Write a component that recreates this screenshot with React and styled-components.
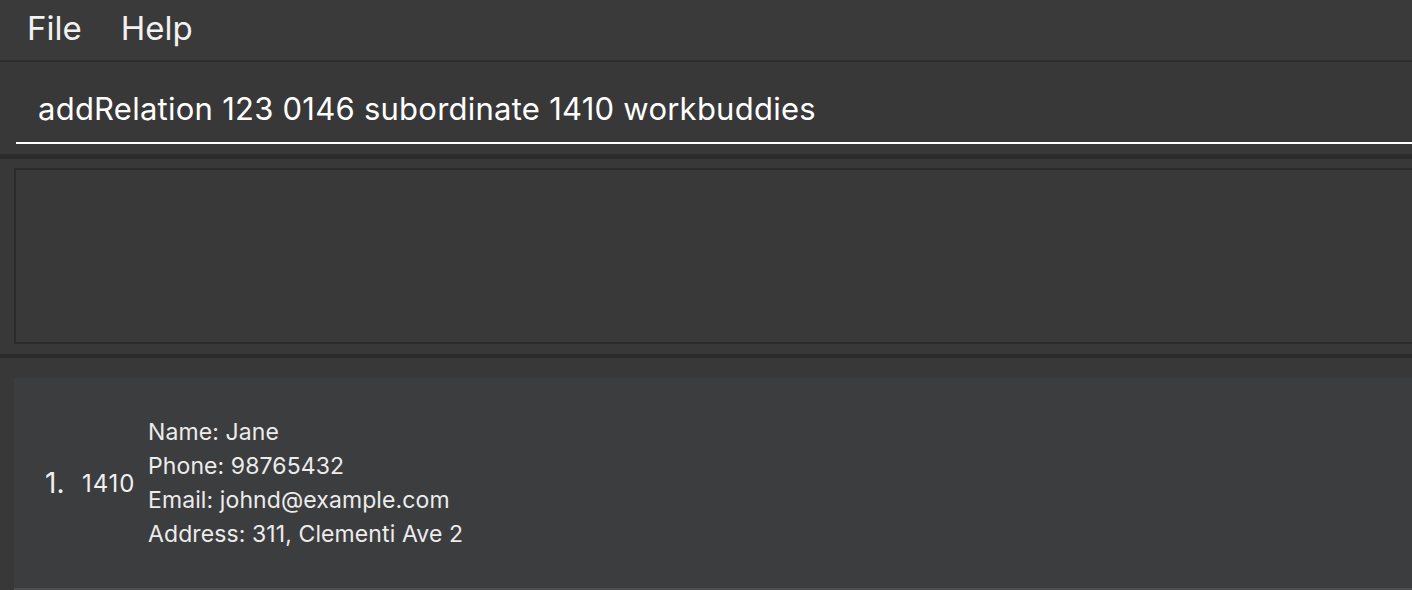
import React from "react";
import styled, { createGlobalStyle } from "styled-components";

const GlobalStyle = createGlobalStyle`
  html, body {
    margin: 0;
    padding: 0;
    background: #383838;
    overflow: hidden;
  }
  * { box-sizing: border-box; }
`;

const FONT = `Inter, "Open Sans", "Liberation Sans", sans-serif`;

const Window = styled.div`
  width: 1412px;
  height: 590px;
  display: flex;
  flex-direction: column;
  background: #383838;
  font-family: ${FONT};
  color: #f0f0f0;
  overflow: hidden;
`;

const MenuBar = styled.div`
  height: 62px;
  flex-shrink: 0;
  display: flex;
  align-items: center;
  gap: 39px;
  padding: 0 0 5px 27px;
  background: #3a3a3a;
  border-bottom: 2px solid #2d2d2d;
`;

const MenuItem = styled.span`
  font-size: 33px;
  color: #f2f2f2;
`;

const CommandArea = styled.div`
  height: 92px;
  flex-shrink: 0;
  padding: 20px 0 0 16px;
  background: #383838;
`;

const CommandInput = styled.div`
  height: 62px;
  border-bottom: 2px solid #ffffff;
  padding: 0 0 8px 22px;
  display: flex;
  align-items: center;
  font-size: 31px;
  color: #ffffff;
  letter-spacing: 0.25px;
  white-space: nowrap;
`;

const Separator = styled.div`
  height: ${(p) => p.$h}px;
  flex-shrink: 0;
  background: #2b2b2b;
`;

const ResultArea = styled.div`
  height: 195px;
  flex-shrink: 0;
  padding: 9px 0 10px 14px;
  background: #383838;
`;

const ResultBox = styled.div`
  width: 1420px;
  height: 176px;
  border: 2px solid #2b2b2b;
  background: #393939;
`;

const ListArea = styled.div`
  flex: 1;
  padding: 20px 0 0 14px;
  background: #383838;
`;

const Card = styled.div`
  width: 1420px;
  height: 210px;
  background: #3c3d3f;
  border-bottom: 2px solid #4c4f52;
  display: flex;
  align-items: center;
  padding-left: 31px;
  box-sizing: content-box;
`;

const Index = styled.span`
  font-size: 28px;
  color: #f0f0f0;
  width: 37px;
  flex-shrink: 0;
`;

const Id = styled.span`
  font-size: 24px;
  letter-spacing: 0.9px;
  color: #f0f0f0;
  width: 66px;
  flex-shrink: 0;
`;

const Details = styled.div`
  display: flex;
  flex-direction: column;
`;

const Field = styled.div`
  font-size: 23px;
  line-height: 34px;
  letter-spacing: 0.1px;
  color: #ececec;
`;

export default function App() {
  return (
    <>
      <GlobalStyle />
      <Window>
        <MenuBar>
          <MenuItem>File</MenuItem>
          <MenuItem>Help</MenuItem>
        </MenuBar>
        <CommandArea>
          <CommandInput>addRelation 123 0146 subordinate 1410 workbuddies</CommandInput>
        </CommandArea>
        <Separator $h={5} />
        <ResultArea>
          <ResultBox />
        </ResultArea>
        <Separator $h={4} />
        <ListArea>
          <Card>
            <Index>1.</Index>
            <Id>1410</Id>
            <Details>
              <Field>Name: Jane</Field>
              <Field>Phone: 98765432</Field>
              <Field>Email: johnd@example.com</Field>
              <Field>Address: 311, Clementi Ave 2</Field>
            </Details>
          </Card>
        </ListArea>
      </Window>
    </>
  );
}
